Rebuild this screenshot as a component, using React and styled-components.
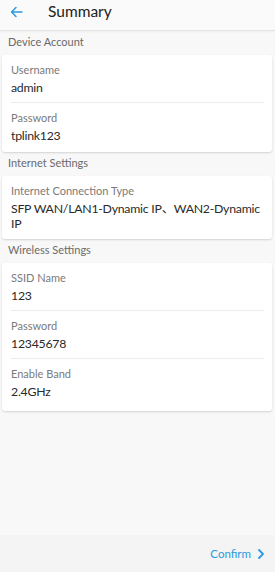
import React from "react";
import styled, { createGlobalStyle } from "styled-components";

const Global = createGlobalStyle`
  html, body { margin: 0; padding: 0; background: #f8f8f8; }
  body { font-family: Lato, "Noto Sans CJK SC", sans-serif; }
  #root { min-height: 572px; }
`;

const Page = styled.div`
  width: 275px;
  height: 572px;
  display: flex;
  flex-direction: column;
  background: #f8f8f8;
  overflow: hidden;
`;

const Header = styled.header`
  height: 31px;
  box-sizing: border-box;
  flex: none;
  display: flex;
  align-items: flex-start;
  padding-top: 1px;
  background: #fafafa;
  border-bottom: 1px solid #e4e4e4;
  box-shadow: 0 1px 2px rgba(0,0,0,0.04);
`;

const Back = styled.button`
  border: 0;
  background: none;
  padding: 0;
  margin: 2px 0 0 9px;
  width: 14px;
  height: 18px;
  display: flex;
  align-items: center;
  justify-content: center;
  color: #2b9be0;
`;

const Title = styled.h1`
  margin: 0 0 0 25px;
  font-size: 15.5px;
  line-height: 20px;
  font-weight: 400;
  color: #222;
`;

const Content = styled.main`
  flex: 1;
  padding: 0 3px 0 2px;
`;

const SectionLabel = styled.div`
  font-size: 11px;
  color: #6a6a6a;
  padding: 3px 0 5px 6px;
  line-height: 16px;
`;

const Card = styled.section`
  background: #fff;
  border-radius: 3px;
  box-shadow: 0 1px 2px rgba(0,0,0,0.15);
  padding: 0 8px ${(p) => p.$extra || 0}px 9px;
`;

const Field = styled.div`
  padding: 8px 0 ${(p) => (p.$last ? "8px" : "7px")} 0;
  border-bottom: ${(p) => (p.$last ? "none" : "1px solid #ececec")};
`;

const Label = styled.div`
  font-size: 11px;
  line-height: 14px;
  color: #7a7a7a;
`;

const Value = styled.div`
  font-size: 12.3px;
  line-height: 15px;
  color: #2a2a2a;
  margin-top: 3px;
  letter-spacing: -0.25px;
`;

const Footer = styled.footer`
  height: 37px;
  flex: none;
  background: #f4f4f4;
  display: flex;
  align-items: center;
  justify-content: flex-end;
  padding-right: 11px;
`;

const Confirm = styled.button`
  border: 0;
  background: none;
  font-family: inherit;
  font-size: 11.5px;
  color: #2b9be0;
  display: flex;
  align-items: center;
  gap: 7px;
  padding: 0;
`;

const sections = [
  {
    title: "Device Account",
    extra: 1,
    fields: [
      ["Username", "admin"],
      ["Password", "tplink123"],
    ],
  },
  {
    title: "Internet Settings",
    extra: 0,
    fields: [["Internet Connection Type", "SFP WAN/LAN1-Dynamic IP、WAN2-Dynamic IP"]],
  },
  {
    title: "Wireless Settings",
    extra: 4,
    fields: [
      ["SSID Name", "123"],
      ["Password", "12345678"],
      ["Enable Band", "2.4GHz"],
    ],
  },
];

export default function App() {
  return (
    <Page>
      <Global />
      <Header>
        <Back aria-label="back">
          <svg width="13" height="12" viewBox="0 0 13 12" fill="none" stroke="currentColor" strokeWidth="1.5" strokeLinecap="round" strokeLinejoin="round">
            <path d="M12 6H1.5M6 1.5L1.5 6L6 10.5" />
          </svg>
        </Back>
        <Title>Summary</Title>
      </Header>
      <Content>
        {sections.map((s) => (
          <React.Fragment key={s.title}>
            <SectionLabel>{s.title}</SectionLabel>
            <Card $extra={s.extra}>
              {s.fields.map(([l, v], i) => (
                <Field key={l} $last={i === s.fields.length - 1}>
                  <Label>{l}</Label>
                  <Value>{v}</Value>
                </Field>
              ))}
            </Card>
          </React.Fragment>
        ))}
      </Content>
      <Footer>
        <Confirm>
          Confirm
          <svg width="6" height="10" viewBox="0 0 6 10" fill="none" stroke="currentColor" strokeWidth="1.8" strokeLinecap="round" strokeLinejoin="round">
            <path d="M1 1L5 5L1 9" />
          </svg>
        </Confirm>
      </Footer>
    </Page>
  );
}
